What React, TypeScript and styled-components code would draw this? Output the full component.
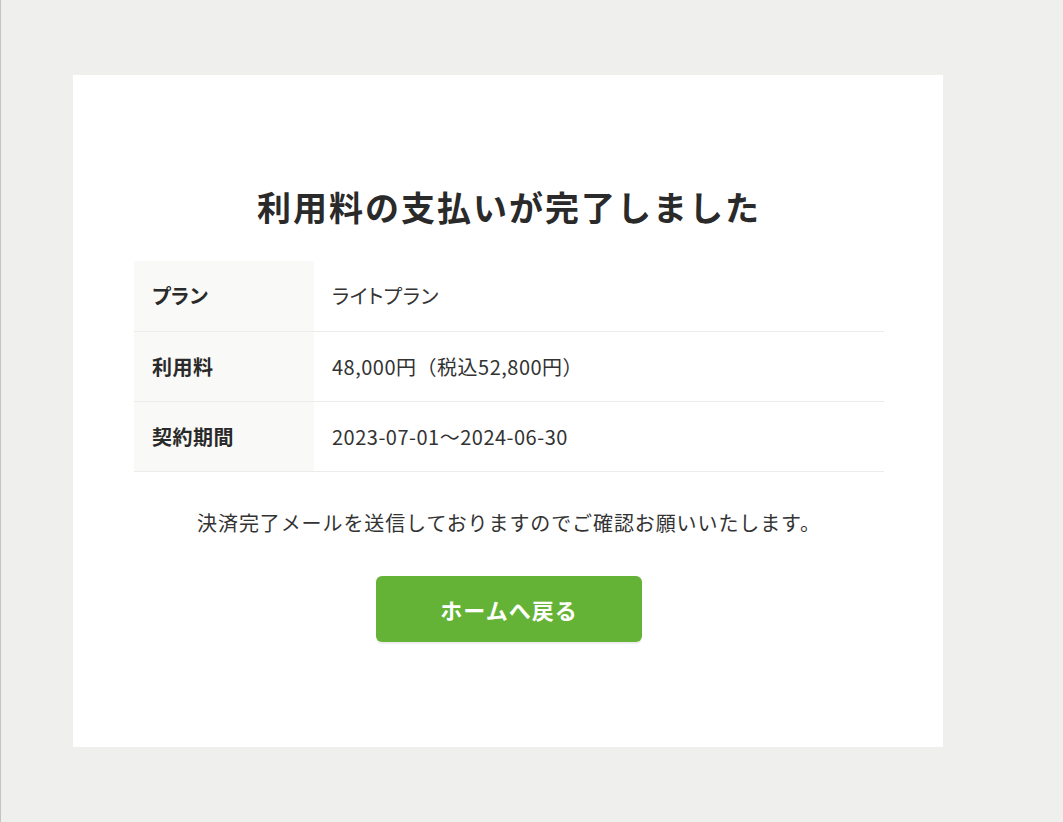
import styled, { createGlobalStyle } from 'styled-components';

const GlobalStyle = createGlobalStyle`
	html, body {
		margin: 0;
		padding: 0;
		background-color: #efefed;
	}
	body {
		font-family: "Noto Sans CJK JP", "Noto Sans", sans-serif;
		color: #333333;
	}
`;

// kana: the value is set with proportional kana widths
const rows = [
	{ label: 'プラン', value: 'ライトプラン', kana: true },
	{ label: '利用料', value: '48,000円（税込52,800円）', kana: false },
	{ label: '契約期間', value: '2023-07-01〜2024-06-30', kana: false },
];

const App = () => {
	return (
		<StyledPage>
			<GlobalStyle />
			<StyledCard>
				<StyledTitle>利用料の支払いが完了しました</StyledTitle>
				<StyledTable>
					<tbody>
						{rows.map((row) => (
							<StyledRow key={row.label}>
								<StyledLabel>{row.label}</StyledLabel>
								<StyledValue $kana={row.kana}>{row.value}</StyledValue>
							</StyledRow>
						))}
					</tbody>
				</StyledTable>
				<StyledMessage>決済完了メールを送信しておりますのでご確認お願いいたします。</StyledMessage>
				<StyledButton type="button">ホームへ戻る</StyledButton>
			</StyledCard>
		</StyledPage>
	);
};

export default App;

const StyledPage = styled.div`
	min-height: 822px;
	box-sizing: border-box;
	border-left: 1px solid #c4c4c4;
	padding: 75px 0 0 72px;
`;

const StyledCard = styled.div`
	width: 870px;
	height: 672px;
	box-sizing: border-box;
	background-color: #ffffff;
	padding: 106px 59px 0 61px;
	display: flex;
	flex-direction: column;
	align-items: center;
`;

const StyledTitle = styled.h1`
	margin: 0;
	font-size: 34px;
	line-height: 51px;
	font-weight: 700;
	letter-spacing: 2px;
	color: #2a2a2a;
`;

const StyledTable = styled.table`
	width: 750px;
	margin-top: 29px;
	border-collapse: collapse;
	letter-spacing: 0.5px;
`;

const StyledRow = styled.tr`
	height: 70px;
	border-bottom: 1px solid #ececec;
`;

const StyledLabel = styled.th`
	width: 180px;
	box-sizing: border-box;
	padding: 0 18px;
	text-align: left;
	font-size: 20px;
	font-weight: 700;
	font-feature-settings: 'palt';
	background-color: #f9f9f7;
	color: #2a2a2a;
	vertical-align: middle;
`;

const StyledValue = styled.td<{ $kana: boolean }>`
	padding: 0 18px;
	font-size: 20px;
	font-weight: 400;
	font-feature-settings: ${({ $kana }) => ($kana ? "'palt'" : 'normal')};
	color: #333333;
	vertical-align: middle;
`;

const StyledMessage = styled.p`
	margin: 33px 0 0;
	font-size: 20px;
	line-height: 36px;
	letter-spacing: 0.9px;
	color: #333333;
`;

const StyledButton = styled.button`
	margin-top: 35px;
	width: 266px;
	height: 66px;
	border: none;
	border-radius: 6px;
	background-color: #65b336;
	box-shadow: 0 2px 1px #eeeeee;
	color: #ffffff;
	font-family: "Noto Sans CJK JP", "Noto Sans", sans-serif;
	font-size: 22px;
	font-weight: 700;
	letter-spacing: 1px;
	cursor: pointer;
`;
